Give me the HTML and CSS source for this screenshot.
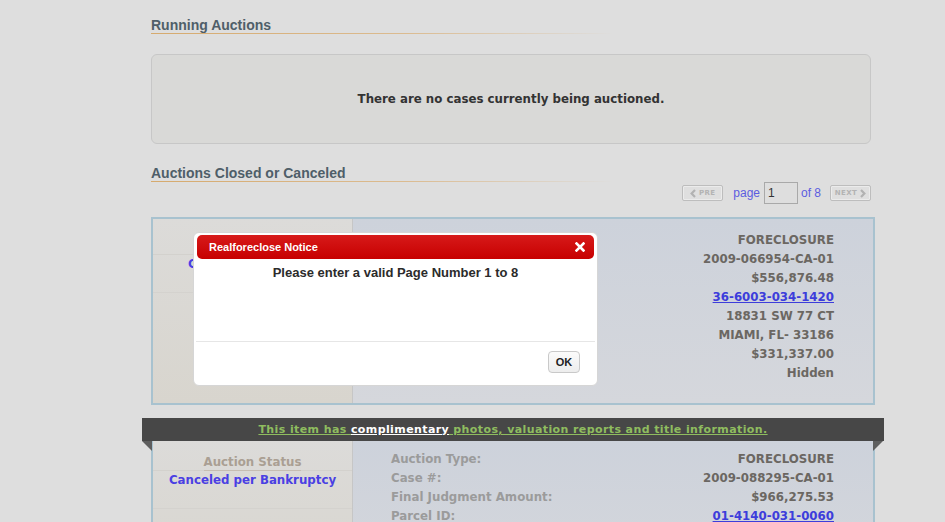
FILE: index.html
```html
<!DOCTYPE html>
<html lang="en">
  <head>
    <meta charset="UTF-8">
    <meta name="viewport" content="width=device-width, initial-scale=1.0">
    <title>Auction Calendar</title>
    <link rel="stylesheet" href="styles.css">
  </head>
  <body>
    <div class="page">
      <h2 class="section-title">Running Auctions</h2>
      <div class="empty-box">There are no cases currently being auctioned.</div>

      <h2 class="section-title">Auctions Closed or Canceled</h2>
      <div class="pager">
        <span class="pager-btn pager-prev">
          <svg width="6" height="9" viewBox="0 0 6 9"><polyline points="5,1 1.6,4.5 5,8" fill="none" stroke="#b2b2b2" stroke-width="2.2"/></svg>
          PRE
        </span>
        <span class="pager-label">page</span>
        <input class="pager-input" type="text" value="1">
        <span class="pager-label">of 8</span>
        <span class="pager-btn pager-next">
          NEXT
          <svg width="6" height="9" viewBox="0 0 6 9"><polyline points="1,1 4.4,4.5 1,8" fill="none" stroke="#b2b2b2" stroke-width="2.2"/></svg>
        </span>
      </div>

      <div class="auction auction-first">
        <div class="auction-status">
          <div class="status-head"><span>Auction Status</span></div>
          <div class="status-value">Canceled per Order</div>
        </div>
        <div class="auction-details">
          <div class="row"><span class="label">Auction Type:</span><span class="value">FORECLOSURE</span></div>
          <div class="row"><span class="label">Case #:</span><span class="value">2009-066954-CA-01</span></div>
          <div class="row"><span class="label">Final Judgment Amount:</span><span class="value">$556,876.48</span></div>
          <div class="row"><span class="label">Parcel ID:</span><span class="value"><a href="#">36-6003-034-1420</a></span></div>
          <div class="row"><span class="label">Property Address:</span><span class="value">18831 SW 77 CT</span></div>
          <div class="row"><span class="label"></span><span class="value">MIAMI, FL- 33186</span></div>
          <div class="row"><span class="label">Assessed Value:</span><span class="value">$331,337.00</span></div>
          <div class="row"><span class="label">Plaintiff Max Bid:</span><span class="value">Hidden</span></div>
        </div>
      </div>

      <div class="promo">
        <a href="#" class="promo-link">This item has <b>complimentary</b> photos, valuation reports and title information.</a>
      </div>
      <div class="auction auction-promoted">
        <div class="auction-status">
          <div class="status-head"><span>Auction Status</span></div>
          <div class="status-value">Canceled per Bankruptcy</div>
        </div>
        <div class="auction-details">
          <div class="row"><span class="label">Auction Type:</span><span class="value">FORECLOSURE</span></div>
          <div class="row"><span class="label">Case #:</span><span class="value">2009-088295-CA-01</span></div>
          <div class="row"><span class="label">Final Judgment Amount:</span><span class="value">$966,275.53</span></div>
          <div class="row"><span class="label">Parcel ID:</span><span class="value"><a href="#">01-4140-031-0060</a></span></div>
          <div class="row"><span class="label">Property Address:</span><span class="value">2455 SW 27 AVE</span></div>
          <div class="row"><span class="label"></span><span class="value">MIAMI, FL- 33133</span></div>
        </div>
      </div>
    </div>

    <div class="dialog">
      <div class="dialog-title">
        <span>Realforeclose Notice</span>
        <svg class="dialog-close" width="10" height="10" viewBox="0 0 10 10">
          <path d="M1.5 1.5 L8.5 8.5 M8.5 1.5 L1.5 8.5" stroke="#fff" stroke-width="2.6" stroke-linecap="square"/>
        </svg>
      </div>
      <div class="dialog-body">Please enter a valid Page Number 1 to 8</div>
      <div class="dialog-buttons">
        <button class="dialog-ok">OK</button>
      </div>
    </div>
  </body>
</html>
```

FILE: styles.css
```css
body {
  margin: 0;
  background-color: #dedede;
  font-family: "DejaVu Sans", Verdana, sans-serif;
  color: #333;
}
.page {
  width: 724px;
  margin-left: 151px;
  padding-bottom: 40px;
}
.section-title {
  margin: 22px 0 0;
  font: bold 14px/15px "Liberation Sans", Arial, sans-serif;
  color: #4f5e69;
}
.section-title:first-child {
  margin-top: 18px;
}
.section-title::after {
  content: "";
  display: block;
  width: 462px;
  height: 1px;
  background: linear-gradient(to right, #d6aa6e 0%, #dbbb90 55%, rgba(222, 222, 222, 0) 100%);
}
.empty-box {
  width: 720px;
  height: 90px;
  box-sizing: border-box;
  margin-top: 20px;
  border: 1px solid #c7c7c7;
  border-radius: 6px;
  background-color: #d9d9d7;
  display: flex;
  align-items: center;
  justify-content: center;
  font-size: 11.8px;
  font-weight: bold;
  color: #333;
}
.pager {
  width: 720px;
  height: 22px;
  display: flex;
  align-items: center;
  justify-content: flex-end;
  font: 12px "Liberation Sans", Arial, sans-serif;
}
.pager-btn {
  display: inline-flex;
  align-items: center;
  justify-content: center;
  gap: 3px;
  width: 41px;
  height: 16px;
  box-sizing: border-box;
  border: 1px solid #bdbdbd;
  border-radius: 2px;
  background-color: #dfdfdf;
  box-shadow: inset 0 0 0 1px #ebebeb;
  color: #b3b3b3;
  font: bold 7px "DejaVu Sans", sans-serif;
  letter-spacing: 0.4px;
}
.pager-prev {
  margin-right: 10px;
}
.pager-next {
  margin-left: 9px;
}
.pager-label {
  color: #5c5ce0;
}
.pager-input {
  width: 34px;
  height: 22px;
  box-sizing: border-box;
  margin: 0 3px 0 4px;
  padding: 0 3px;
  border: 1px solid #a9a9a9;
  background-color: #dedede;
  font: 12px "Liberation Sans", Arial, sans-serif;
  color: #333;
}
.auction {
  display: flex;
  border: 2px solid #a8c2cf;
  font-size: 11.8px;
  font-weight: bold;
}
.auction-first {
  margin-top: 13px;
}
.auction-promoted {
  border-top: none;
}
.auction-status {
  width: 199px;
  flex-shrink: 0;
  border-right: 1px solid #c6c6c6;
  background: linear-gradient(#dcdbd9, #d8d5ce);
  text-align: center;
}
.status-head {
  display: flex;
  justify-content: center;
  line-height: 15px;
  border-bottom: 1px solid #d3d1cd;
  color: #aa9f93;
}
.status-head span {
  margin-bottom: -1px;
  border-bottom: 1px solid #c6bdb2;
}
.auction-first .status-head {
  padding-top: 20px;
}
.auction-promoted .status-head {
  padding-top: 14px;
}
.status-value {
  margin-top: 1px;
  padding-bottom: 19px;
  line-height: 17px;
  color: #4a3fe3;
  border-bottom: 1px solid #d4d2ce;
}
.auction-details {
  flex: 1;
  background: linear-gradient(#cdd2db, #d5d7dc);
  padding: 12px 39px 20px 38px;
}
.auction-promoted .auction-details {
  padding-top: 9px;
}
.row {
  display: flex;
  justify-content: space-between;
  line-height: 19px;
}
.label {
  color: #9b9b9b;
}
.value {
  color: #6b6762;
}
.value a {
  color: #3d3ddb;
}
.promo {
  margin: 13px -9px 0;
  height: 23px;
  position: relative;
  background-color: #474747;
  text-align: center;
  line-height: 23px;
  font-size: 11px;
  font-weight: bold;
  letter-spacing: 0.4px;
}
.promo::before,
.promo::after {
  content: "";
  position: absolute;
  top: 100%;
  width: 0;
  height: 0;
  border-top: 10px solid #5e5e5e;
}
.promo::before {
  left: 0;
  border-left: 10px solid transparent;
}
.promo::after {
  right: 1px;
  border-right: 10px solid transparent;
}
.promo-link {
  color: #8fbd5f;
}
.promo-link b {
  color: #fff;
  text-decoration: underline;
}
.dialog {
  position: absolute;
  left: 193px;
  top: 232px;
  width: 405px;
  height: 154px;
  box-sizing: border-box;
  padding: 2px 3px 3px;
  border: 1px solid #d6d6d6;
  border-radius: 6px;
  background-color: #fff;
  font-family: "Liberation Sans", Arial, sans-serif;
}
.dialog-title {
  height: 24px;
  box-sizing: border-box;
  padding: 0 9px 0 12px;
  display: flex;
  align-items: center;
  justify-content: space-between;
  border-radius: 5px;
  background: linear-gradient(#d71a1a, #c70000);
  color: #fff;
  font-size: 11px;
  font-weight: bold;
}
.dialog-body {
  height: 83px;
  box-sizing: border-box;
  margin: 0 -1px;
  padding-top: 6px;
  border-bottom: 1px solid #e6e6e6;
  text-align: center;
  font-size: 13px;
  font-weight: bold;
  line-height: 16px;
  color: #2b2b2b;
}
.dialog-buttons {
  display: flex;
  justify-content: flex-end;
  padding: 9px 14px 0 0;
}
.dialog-ok {
  width: 32px;
  height: 22px;
  padding: 0;
  border: 1px solid #c9c9c9;
  border-radius: 4px;
  background: linear-gradient(#fbfbfb, #ededed);
  font: bold 11px "Liberation Sans", Arial, sans-serif;
  color: #222;
}
```
